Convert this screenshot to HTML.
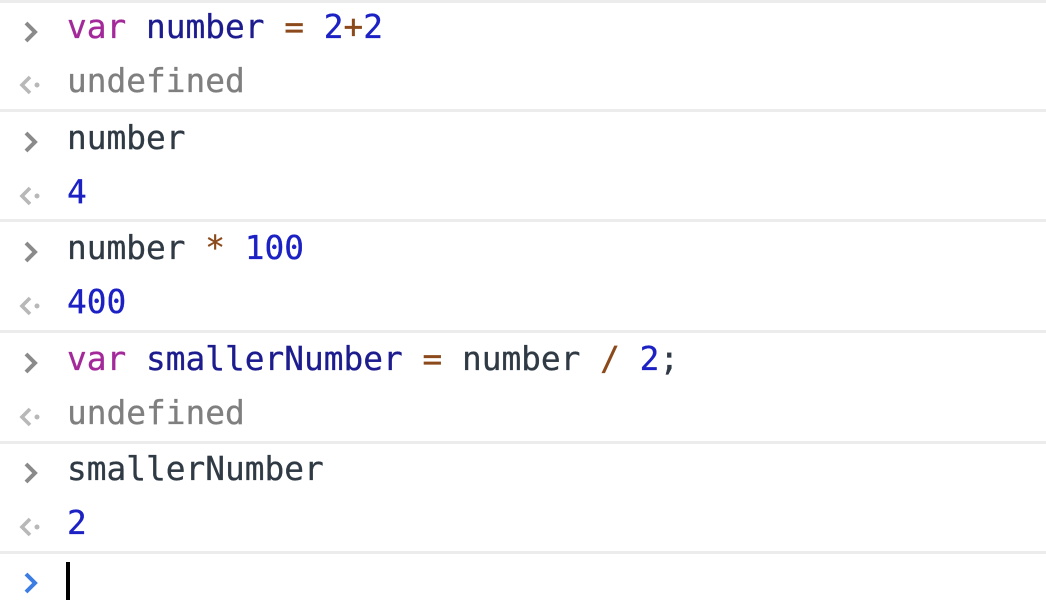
<!DOCTYPE html>
<html><head><style>
html,body{margin:0;padding:0;background:#fff;width:1046px;height:614px;overflow:hidden}
.sep{position:absolute;left:0;width:1046px;height:3px;background:#ececec}
.t{position:absolute;left:67px;font-family:"DejaVu Sans Mono","Liberation Mono",monospace;font-size:32.8px;line-height:40px;white-space:pre;color:#2f3a44;-webkit-text-stroke:0.3px currentColor}
.ic{position:absolute;left:18px}
.k{color:#a3299a}.v{color:#1d1c8f}.o{color:#8c4a1c}.n{color:#1c21c4}.u{color:#7f7f7f}
</style></head><body>
<div class="sep" style="top:0"></div>
<div class="sep" style="top:109px"></div>
<div class="sep" style="top:219px"></div>
<div class="sep" style="top:330px"></div>
<div class="sep" style="top:441px"></div>
<div class="sep" style="top:551px"></div>

<svg class="ic" style="top:20px" width="24" height="24" viewBox="0 0 24 24"><path d="M8 3 L17 12 L8 21" fill="none" stroke="#8a8a8a" stroke-width="4"/></svg>
<div class="t" style="top:7px"><span class="k">var</span> <span class="v">number</span> <span class="o">=</span> <span class="n">2</span><span class="o">+</span><span class="n">2</span></div>
<svg class="ic" style="top:73px" width="24" height="24" viewBox="0 0 24 24"><path d="M12 4 L4 12 L12 20" fill="none" stroke="#b8b8b8" stroke-width="3.6"/><circle cx="19" cy="12" r="2.5" fill="#b8b8b8"/></svg>
<div class="t u" style="top:61px">undefined</div>

<svg class="ic" style="top:130px" width="24" height="24" viewBox="0 0 24 24"><path d="M8 3 L17 12 L8 21" fill="none" stroke="#8a8a8a" stroke-width="4"/></svg>
<div class="t" style="top:118px">number</div>
<svg class="ic" style="top:184px" width="24" height="24" viewBox="0 0 24 24"><path d="M12 4 L4 12 L12 20" fill="none" stroke="#b8b8b8" stroke-width="3.6"/><circle cx="19" cy="12" r="2.5" fill="#b8b8b8"/></svg>
<div class="t n" style="top:172px">4</div>

<svg class="ic" style="top:240px" width="24" height="24" viewBox="0 0 24 24"><path d="M8 3 L17 12 L8 21" fill="none" stroke="#8a8a8a" stroke-width="4"/></svg>
<div class="t" style="top:228px">number <span class="o">*</span> <span class="n">100</span></div>
<svg class="ic" style="top:294px" width="24" height="24" viewBox="0 0 24 24"><path d="M12 4 L4 12 L12 20" fill="none" stroke="#b8b8b8" stroke-width="3.6"/><circle cx="19" cy="12" r="2.5" fill="#b8b8b8"/></svg>
<div class="t n" style="top:282px">400</div>

<svg class="ic" style="top:351px" width="24" height="24" viewBox="0 0 24 24"><path d="M8 3 L17 12 L8 21" fill="none" stroke="#8a8a8a" stroke-width="4"/></svg>
<div class="t" style="top:339px"><span class="k">var</span> <span class="v">smallerNumber</span> <span class="o">=</span> number <span class="o">/</span> <span class="n">2</span>;</div>
<svg class="ic" style="top:405px" width="24" height="24" viewBox="0 0 24 24"><path d="M12 4 L4 12 L12 20" fill="none" stroke="#b8b8b8" stroke-width="3.6"/><circle cx="19" cy="12" r="2.5" fill="#b8b8b8"/></svg>
<div class="t u" style="top:393px">undefined</div>

<svg class="ic" style="top:461px" width="24" height="24" viewBox="0 0 24 24"><path d="M8 3 L17 12 L8 21" fill="none" stroke="#8a8a8a" stroke-width="4"/></svg>
<div class="t" style="top:449px">smallerNumber</div>
<svg class="ic" style="top:515px" width="24" height="24" viewBox="0 0 24 24"><path d="M12 4 L4 12 L12 20" fill="none" stroke="#b8b8b8" stroke-width="3.6"/><circle cx="19" cy="12" r="2.5" fill="#b8b8b8"/></svg>
<div class="t n" style="top:503px">2</div>

<svg class="ic" style="top:571px" width="24" height="24" viewBox="0 0 24 24"><path d="M8 3 L17 12 L8 21" fill="none" stroke="#3b7de3" stroke-width="4"/></svg>
<div style="position:absolute;left:66px;top:562px;width:4px;height:38px;background:#000"></div>
</body></html>
